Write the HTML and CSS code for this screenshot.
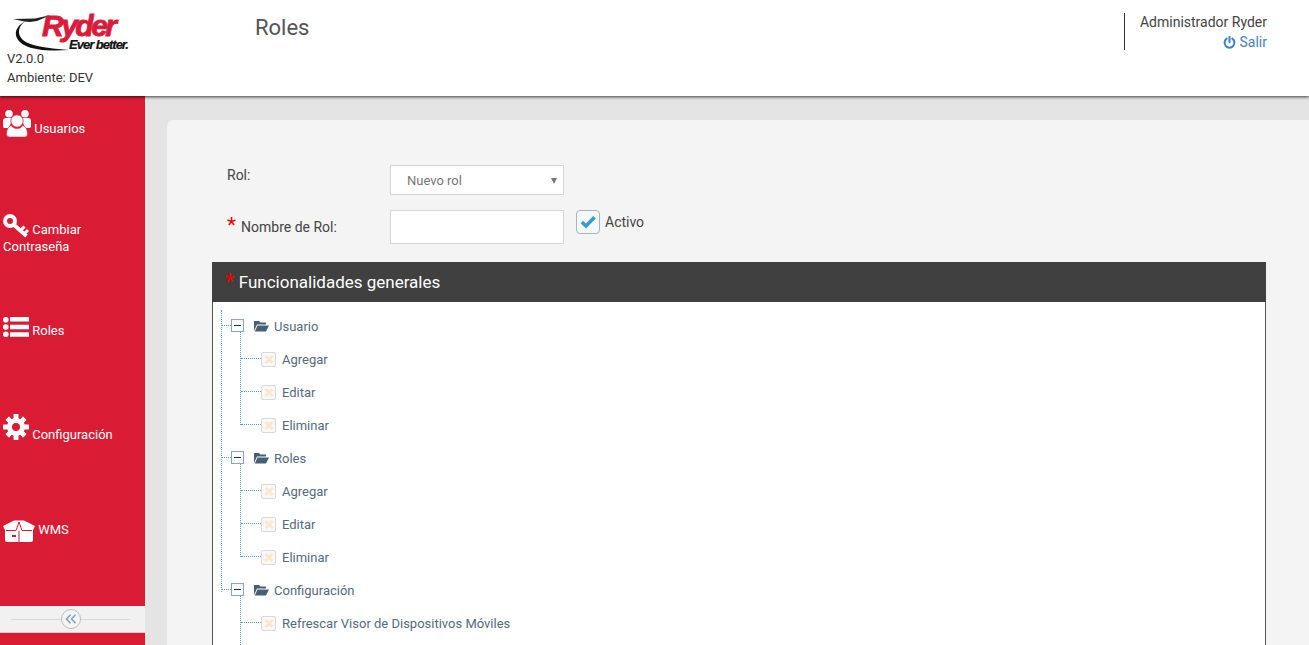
FILE: index.html
```html
<!DOCTYPE html>
<html lang="es">
<head>
<meta charset="utf-8">
<title>Roles</title>
<link rel="stylesheet" href="styles.css">
</head>
<body>
<header class="topbar">
  <div class="brand">
    <div class="logo">
      <svg class="swoosh" viewBox="0 0 60 36" width="60" height="36">
        <path d="M0 4 L22 3.500 L38 0 L24 6 L17 7 L11 6.500 Z" fill="#222"/>
        <path d="M12 6.500 C3 13 4 23 15 28 C27 33 42 33.500 56 35 C40 36 22 36 11 30 C-1 23 1 12 12 6.500 Z" fill="#111"/>
      </svg>
      <span class="logo-ryder">Ryder</span>
      <span class="logo-tag">Ever better.</span>
    </div>
    <div class="meta">V2.0.0</div>
    <div class="meta">Ambiente: DEV</div>
  </div>
  <h1 class="page-title">Roles</h1>
  <div class="user">
    <div>Administrador Ryder</div>
    <a class="logout">
      <svg viewBox="0 0 14 14" width="13" height="13"><path d="M4 2.900 A5.300 5.300 0 1 0 10 2.900" fill="none" stroke="#3d85c6" stroke-width="2.200" stroke-linecap="round"/><path d="M7 .8 V6.800" stroke="#3d85c6" stroke-width="2.200" stroke-linecap="round"/></svg>
      Salir
    </a>
  </div>
</header>

<div class="body-row">
  <aside class="sidebar">
    <nav class="nav">
      <div class="nav-item nav-users">
        <svg class="ico ico-users" viewBox="0 0 28 27" width="28" height="27"><g fill="#fff"><circle cx="6" cy="3.800" r="3.800"/><circle cx="22" cy="3.800" r="3.800"/><path d="M0 11 Q0 8 3 8 H9 Q9 13 5 18 H1.500 Q0 18 0 16 Z"/><path d="M28 11 Q28 8 25 8 H19 Q19 13 23 18 H26.500 Q28 18 28 16 Z"/></g><circle cx="14" cy="11" r="6.200" fill="#fff" stroke="#d91c33" stroke-width=".8"/><path d="M6.500 27 Q3.500 27 3.500 24 C3.500 20 5 17 8 15.500 C10 18 12 18.500 14 18.500 C16 18.500 18 18 20 15.500 C23 17 24.500 20 24.500 24 Q24.500 27 21.500 27 Z" fill="#fff" stroke="#d91c33" stroke-width=".5"/></svg>
        <span>Usuarios</span>
      </div>
      <div class="nav-item nav-key">
        <svg class="ico ico-key" viewBox="0 0 26 24" width="26" height="24"><g fill="none" stroke="#fff"><circle cx="7" cy="7" r="5" stroke-width="4"/><path d="M10.500 10.500 L23.500 22" stroke-width="3.800"/><path d="M18 16 L21.500 12.500 M21.500 19.500 L25 16" stroke-width="3"/></g></svg>
        <span>Cambiar Contraseña</span>
      </div>
      <div class="nav-item nav-list">
        <svg class="ico ico-list" viewBox="0 0 26 20" width="26" height="20"><g fill="#fff"><circle cx="2.800" cy="2.800" r="2.800"/><circle cx="2.800" cy="10" r="2.800"/><circle cx="2.800" cy="17.200" r="2.800"/><rect x="7" y="0" width="19" height="4.500" rx=".5"/><rect x="7" y="7.700" width="19" height="4.500" rx=".5"/><rect x="7" y="15.300" width="19" height="4.500" rx=".5"/></g></svg>
        <span>Roles</span>
      </div>
      <div class="nav-item nav-gear">
        <svg class="ico ico-gear" viewBox="0 0 26 26" width="26" height="26"><circle cx="13" cy="13" r="6.500" fill="none" stroke="#fff" stroke-width="5"/><g fill="#fff"><rect x="10.500" y="0" width="5" height="5" rx=".6"/><rect x="10.500" y="21" width="5" height="5" rx=".6"/><rect x="0" y="10.500" width="5" height="5" rx=".6"/><rect x="21" y="10.500" width="5" height="5" rx=".6"/><rect x="10.500" y="0.500" width="5" height="5" rx=".6" transform="rotate(45 13 13)"/><rect x="10.500" y="0.500" width="5" height="5" rx=".6" transform="rotate(135 13 13)"/><rect x="10.500" y="0.500" width="5" height="5" rx=".6" transform="rotate(225 13 13)"/><rect x="10.500" y="0.500" width="5" height="5" rx=".6" transform="rotate(315 13 13)"/></g></svg>
        <span>Configuración</span>
      </div>
      <div class="nav-item nav-box">
        <svg class="ico ico-box" viewBox="0 0 32 22" width="32" height="22"><path d="M0 6 L11 0.500 H21 L32 6 L30 10 V20 Q30 22 28 22 H4 Q2 22 2 20 V10 Z" fill="#fff"/><path d="M3 10.500 H13 L16 2 L19 10.500 H29" fill="none" stroke="#d91c33" stroke-width="1"/><path d="M15 11 H17 V22 H15 Z" fill="#e98a96"/><rect x="9" y="15" width="4" height="2" fill="#d91c33"/></svg>
        <span>WMS</span>
      </div>
    </nav>
    <div class="collapse">
      <span class="collapse-btn">
        <svg viewBox="0 0 12 10" width="12" height="10"><path d="M5.500 .8 L1.500 5 L5.500 9.200 M10.500 .8 L6.500 5 L10.500 9.200" fill="none" stroke="#7e9fb5" stroke-width="1.500"/></svg>
      </span>
    </div>
  </aside>

  <main class="content">
    <section class="card">
      <div class="form-row row-rol">
        <label class="lbl lbl-rol">Rol:</label>
        <div class="select">Nuevo rol<span class="caret"></span></div>
      </div>
      <div class="form-row row-name">
        <label class="lbl lbl-name"><span class="req">*</span><span class="name-text">Nombre de Rol:</span></label>
        <input class="input" type="text">
        <span class="check">
          <svg viewBox="0 0 16 14" width="16" height="14"><path d="M1.800 7 L6 11 L14.500 2.200" fill="none" stroke="#3a9dc9" stroke-width="3.600"/></svg>
        </span>
        <span class="check-lbl">Activo</span>
      </div>

      <div class="panel">
        <div class="panel-head"><span class="req req-big">*</span> Funcionalidades generales</div>
        <ul class="tree">
          <li class="group">
            <div class="node"><span class="toggle"></span><svg class="folder" viewBox="0 0 15 12" width="15" height="12"><path d="M0 11 V1 H5 L6.500 2.500 H12 V4.500 H3 Z" fill="#475f73"/><path d="M.8 11.500 L3.500 5.500 H15 L12 11.500 Z" fill="#475f73"/></svg><span class="group-name">Usuario</span></div>
            <ul class="leaves">
              <li class="leaf"><span class="cb"></span>Agregar</li>
              <li class="leaf"><span class="cb"></span>Editar</li>
              <li class="leaf"><span class="cb"></span>Eliminar</li>
            </ul>
          </li>
          <li class="group">
            <div class="node"><span class="toggle"></span><svg class="folder" viewBox="0 0 15 12" width="15" height="12"><path d="M0 11 V1 H5 L6.500 2.500 H12 V4.500 H3 Z" fill="#475f73"/><path d="M.8 11.500 L3.500 5.500 H15 L12 11.500 Z" fill="#475f73"/></svg><span class="group-name">Roles</span></div>
            <ul class="leaves">
              <li class="leaf"><span class="cb"></span>Agregar</li>
              <li class="leaf"><span class="cb"></span>Editar</li>
              <li class="leaf"><span class="cb"></span>Eliminar</li>
            </ul>
          </li>
          <li class="group group-open">
            <div class="node"><span class="toggle"></span><svg class="folder" viewBox="0 0 15 12" width="15" height="12"><path d="M0 11 V1 H5 L6.500 2.500 H12 V4.500 H3 Z" fill="#475f73"/><path d="M.8 11.500 L3.500 5.500 H15 L12 11.500 Z" fill="#475f73"/></svg><span class="group-name">Configuración</span></div>
            <ul class="leaves">
              <li class="leaf"><span class="cb"></span>Refrescar Visor de Dispositivos Móviles</li>
              <li class="leaf"></li>
            </ul>
          </li>
        </ul>
      </div>
    </section>
  </main>
</div>
</body>
</html>
```
FILE: styles.css
```css
* { box-sizing: border-box; }
html, body { margin: 0; height: 100%; overflow: hidden; }
body {
  display: flex;
  flex-direction: column;
  font-family: Roboto, "Liberation Sans", sans-serif;
  font-size: 14px;
  color: #333;
  background: #e4e4e4;
}

/* Header */
.topbar {
  position: relative;
  z-index: 2;
  flex: 0 0 96px;
  display: flex;
  align-items: flex-start;
  background: #fff;
  box-shadow: 0 1px 3px rgba(0, 0, 0, .75);
}
.brand { flex: 0 0 255px; padding: 15px 0 0 7px; }
.logo { position: relative; width: 125px; height: 34px; }
.swoosh { position: absolute; left: 6px; top: 0; }
.logo-ryder {
  position: absolute;
  left: 35px;
  top: 0;
  font: italic 700 30px/22px "Liberation Sans", sans-serif;
  letter-spacing: -2.500px;
  color: #d91c3c;
  -webkit-text-stroke: .9px #d91c3c;
}
.logo-tag {
  position: absolute;
  left: 62px;
  top: 23px;
  font: italic 700 13px/13px "Liberation Sans", sans-serif;
  letter-spacing: -1px;
  color: #111;
  white-space: nowrap;
  -webkit-text-stroke: .2px #111;
}
.meta { font-size: 13px; line-height: 19px; color: #333; }
.page-title {
  flex: 1;
  margin: 14px 0 0;
  font-size: 22px;
  line-height: 27px;
  font-weight: 400;
  color: #555;
}
.user {
  margin: 13px 42px 0 0;
  padding: 0 0 0 15px;
  height: 37px;
  border-left: 1px solid #333;
  text-align: right;
  line-height: 18px;
  color: #444;
}
.logout {
  display: block;
  margin-top: 2px;
  color: #4a7fc1;
}
.logout svg { vertical-align: -2px; }

/* Body */
.body-row { flex: 1; min-height: 0; display: flex; }
.sidebar {
  flex: 0 0 145px;
  display: flex;
  flex-direction: column;
  background: #d91c33;
  color: #fff;
  font-size: 13px;
}
.nav { flex: 0 0 510px; padding: 14px 0 0 3px; }
.nav-item { line-height: 17px; }
.nav-users { height: 103px; }
.nav-key { height: 103px; padding-top: 1px; }
.nav-list { height: 98px; padding-top: 1px; }
.nav-gear { height: 106px; }
.nav-box { height: 82px; }
.ico { display: inline-block; }
.ico-users { vertical-align: -4px; }
.ico-key { vertical-align: -4px; }
.ico-list { vertical-align: -2px; }
.ico-gear { vertical-align: -1px; }
.ico-box { vertical-align: -8px; }

.collapse {
  position: relative;
  flex: 0 0 27px;
  display: flex;
  align-items: center;
  justify-content: center;
  background: #f1f1f1;
  border-bottom: 1px solid #ccc;
}
.collapse::before {
  content: "";
  position: absolute;
  left: 11px;
  right: 15px;
  top: 13px;
  border-top: 1px solid #d8d8d8;
}
.collapse-btn {
  position: relative;
  display: flex;
  align-items: center;
  justify-content: center;
  width: 20px;
  height: 20px;
  margin-left: -3px;
  border: 1px solid #bbb;
  border-radius: 50%;
  background: #f4f4f4;
}

/* Content */
.content { flex: 1; min-width: 0; padding: 24px 0 0 22px; }
.card {
  height: 100%;
  padding: 45px 43px 0 45px;
  background: #f4f4f4;
  border-radius: 7px 0 0 0;
  overflow: hidden;
}
.form-row { display: flex; align-items: flex-start; }
.row-rol { height: 45px; margin-left: 15px; }
.row-name { height: 52px; margin-left: 15px; }
.lbl { flex: 0 0 163px; color: #444; line-height: 20px; }
.lbl-rol { padding-top: 0; }
.lbl-name { padding-top: 7px; display: flex; }
.name-text { margin-left: 5px; }
.req { color: #e00; font-size: 21px; line-height: 14px; vertical-align: -1px; font-weight: 400; }
.lbl-name .req { line-height: 18px; margin-top: -1px; }
.req-big { font-size: 22px; vertical-align: -1px; }
.select {
  position: relative;
  width: 174px;
  height: 30px;
  padding-left: 16px;
  background: #fff;
  border: 1px solid #d5d5d5;
  font-size: 13px;
  line-height: 29px;
  color: #777;
}
.caret {
  position: absolute;
  right: 6px;
  top: 12px;
  border-left: 3px solid transparent;
  border-right: 3px solid transparent;
  border-top: 6px solid #777;
}
.input {
  width: 174px;
  height: 34px;
  padding: 0;
  background: #fff;
  border: 1px solid #d5d5d5;
  border-radius: 0;
  outline: none;
}
.check {
  display: flex;
  align-items: center;
  justify-content: center;
  width: 24px;
  height: 24px;
  margin-left: 12px;
  background: #f3f8fb;
  border: 1px solid #a9b4bd;
  border-radius: 4px;
}
.check-lbl { margin-left: 5px; line-height: 24px; color: #444; }

.panel {
  width: 1054px;
  background: #fff;
  border: 1px solid #555;
  border-top: 0;
  height: 400px;
}
.panel-head {
  height: 40px;
  margin: 0 -1px;
  padding-left: 13px;
  background: #404040;
  color: #fff;
  font-size: 17px;
  font-weight: 400;
  line-height: 40px;
}

/* Tree */
.tree, .leaves { list-style: none; margin: 0; padding: 0; }
.tree { position: relative; padding: 8px 0 0 18px; }
.tree::before {
  content: "";
  position: absolute;
  left: 8px;
  top: 8px;
  height: 282px;
  border-left: 1px dotted #5a9bc4;
}
.node {
  position: relative;
  display: flex;
  align-items: center;
  height: 33px;
  color: #566a7d;
  font-size: 13px;
}
.node::before {
  content: "";
  position: absolute;
  left: -10px;
  width: 10px;
  top: 15px;
  border-top: 1px dotted #5a9bc4;
}
.toggle {
  position: relative;
  width: 13px;
  height: 13px;
  margin-bottom: 2px;
  background: #fff;
  border: 1px solid #86a8bd;
}
.toggle::before {
  content: "";
  position: absolute;
  left: 2px;
  right: 2px;
  top: 5px;
  border-top: 1px solid #333;
}
.folder { margin: 0 0 2px 10px; }
.group-name { margin-left: 5px; }
.leaves { position: relative; padding-left: 30px; }
.leaves::before {
  content: "";
  position: absolute;
  left: 9px;
  top: -11px;
  bottom: 17px;
  border-left: 1px dotted #5a9bc4;
}
.group-open .leaves::before { bottom: -40px; }
.leaf {
  position: relative;
  display: flex;
  align-items: center;
  height: 33px;
  color: #566a7d;
  font-size: 13px;
}
.leaf::before {
  content: "";
  position: absolute;
  left: -20px;
  width: 20px;
  top: 15px;
  border-top: 1px dotted #5a9bc4;
}
.leaf:empty::before { display: none; }
.cb {
  position: relative;
  width: 15px;
  height: 15px;
  margin-right: 6px;
  background: #f8f8f8;
  border: 1px solid #d8d8d8;
  border-radius: 2px;
}
.cb::before, .cb::after {
  content: "";
  position: absolute;
  left: 1.500px;
  right: 1.500px;
  top: 5px;
  height: 3px;
  background: #fbe6cf;
  transform: rotate(45deg);
}
.cb::after { transform: rotate(-45deg); }
```
